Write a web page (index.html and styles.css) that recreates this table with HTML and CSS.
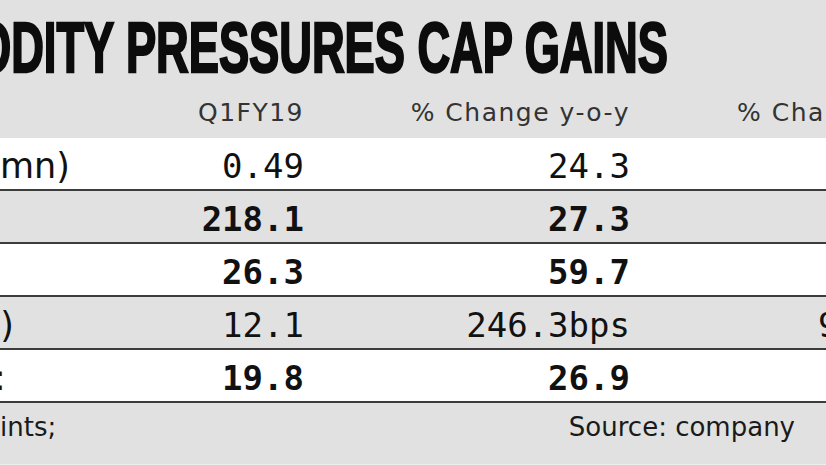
FILE: index.html
```html
<!DOCTYPE html>
<html lang="en">
<head>
<meta charset="utf-8">
<title>Commodity pressures cap gains</title>
<link rel="stylesheet" href="styles.css">
</head>
<body>
<div class="page">
  <h1 class="title"><span class="title-text">ODITY PRESSURES CAP GAINS</span></h1>
  <div class="table">
    <div class="row head">
      <div class="cell label"></div>
      <div class="cell num">Q1FY19</div>
      <div class="cell num">% Change y-o-y</div>
      <div class="cell extra">% Change q-o-q</div>
    </div>
    <div class="row data white">
      <div class="cell label">mn)</div>
      <div class="cell num">0.49</div>
      <div class="cell num">24.3</div>
      <div class="cell extra"></div>
    </div>
    <div class="row data bold">
      <div class="cell label"></div>
      <div class="cell num">218.1</div>
      <div class="cell num">27.3</div>
      <div class="cell extra"></div>
    </div>
    <div class="row data white bold">
      <div class="cell label"></div>
      <div class="cell num">26.3</div>
      <div class="cell num">59.7</div>
      <div class="cell extra"></div>
    </div>
    <div class="row data">
      <div class="cell label cut-s">s)</div>
      <div class="cell num">12.1</div>
      <div class="cell num">246.3bps</div>
      <div class="cell extra">9</div>
    </div>
    <div class="row data white bold">
      <div class="cell label cut-colon">:</div>
      <div class="cell num">19.8</div>
      <div class="cell num">26.9</div>
      <div class="cell extra"></div>
    </div>
  </div>
  <div class="footer">
    <span class="note">ints;</span>
    <span class="source">Source: company</span>
  </div>
</div>
</body>
</html>
```
FILE: styles.css
```css
html, body {
  margin: 0;
  padding: 0;
}

body {
  width: 826px;
  height: 465px;
  overflow: hidden;
  background: #e1e1e1;
  color: #111;
  font-family: "DejaVu Sans", sans-serif;
}

.page {
  width: 826px;
  height: 465px;
  overflow: hidden;
}

.title {
  margin: 0;
  padding-top: 13px;
  height: 67px;
  font-family: "Liberation Sans", Arial, sans-serif;
  font-weight: 700;
  font-size: 70px;
  line-height: 70px;
  white-space: nowrap;
  color: #0c0c0c;
}

.title-text {
  display: inline-block;
  margin-left: -24px;
  transform: scaleX(0.646);
  transform-origin: 0 0;
  -webkit-text-stroke: 2.4px #0c0c0c;
}

.row {
  display: grid;
  grid-template-columns: 150px 154px 326px 196px;
  box-sizing: border-box;
}

.cell {
  white-space: nowrap;
}

.label,
.extra {
  overflow: hidden;
}

.num {
  text-align: right;
}

.head {
  height: 58px;
  padding-top: 18px;
  font-family: "DejaVu Sans", sans-serif;
  font-size: 25px;
  line-height: 30px;
  letter-spacing: 1.5px;
  color: #333333;
}

.head .num:nth-child(2) {
  padding-right: 0;
}

.head .extra {
  padding-left: 107px;
}

.data {
  height: 53px;
  padding-top: 5px;
  border-bottom: 2px solid #3c3c3c;
  font-family: "DejaVu Sans Mono", monospace;
  font-size: 34px;
  line-height: 46px;
}

.data .extra {
  padding-left: 188px;
}

.white {
  background: #ffffff;
}

.bold .num {
  font-weight: 700;
}

.label {
  font-family: "DejaVu Sans", sans-serif;
  font-size: 35px;
  font-weight: 400;
}

.cut-s {
  text-indent: -18px;
}

.cut-colon {
  text-indent: -6px;
}

.footer {
  display: flex;
  box-sizing: border-box;
  height: 62px;
  padding-top: 9px;
  font-family: "DejaVu Sans", sans-serif;
  font-size: 26px;
  line-height: 30px;
  color: #1a1a1a;
  border-bottom: 1px solid #ededed;
}

.source {
  margin-left: auto;
  padding-right: 31px;
}
```
